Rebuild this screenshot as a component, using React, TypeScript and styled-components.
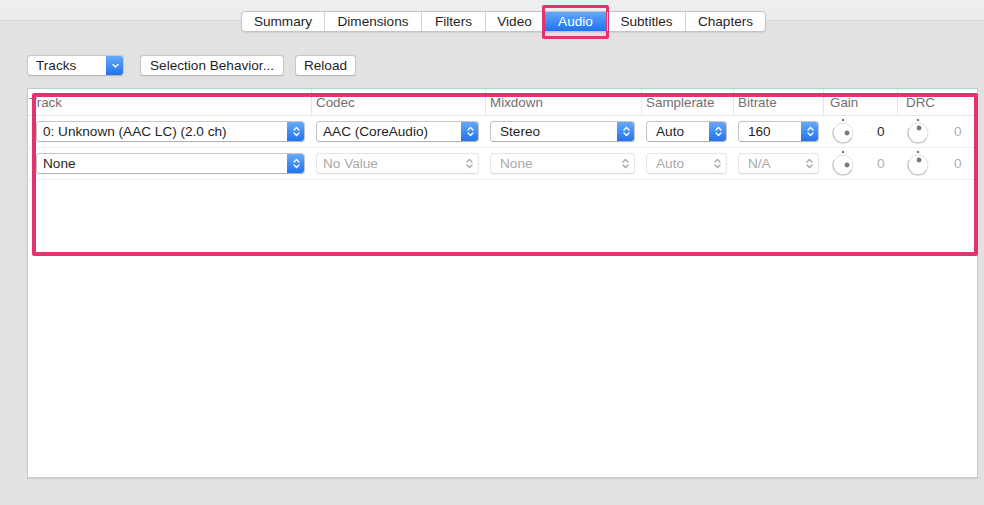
import React from "react"
import styled, { createGlobalStyle, css } from "styled-components"

const GlobalStyle = createGlobalStyle`
  *, *::before, *::after { box-sizing: border-box; }
  html, body { margin: 0; padding: 0; }
  body {
    background: #e2e2e2;
    font-family: "Liberation Sans", Arial, sans-serif;
    font-size: 13.6px;
    color: #1f1f1f;
  }
`

const Window = styled.div`
  width: 984px;
  height: 505px;
  display: flex;
  flex-direction: column;
  overflow: hidden;
  background: linear-gradient(
    #eeeeee 0,
    #ececec 20px,
    #d6d6d6 20px,
    #d6d6d6 21px,
    #e2e2e2 21px
  );
`

const TabBar = styled.div`
  display: flex;
  align-self: flex-start;
  margin: 11px 0 0 241px;
  height: 21px;
  background: #fff;
  border: 1px solid #c4c4c4;
  border-radius: 4px;
  box-shadow: 0 1px 1px rgba(0, 0, 0, 0.08);
`
const Tab = styled.div<{ $w: number; $active?: boolean }>`
  position: relative;
  width: ${(p) => p.$w}px;
  display: flex;
  align-items: center;
  justify-content: center;
  border-left: 1px solid #d4d4d4;
  &:first-child {
    border-left: none;
  }
  ${(p) =>
    p.$active &&
    css`
      background: linear-gradient(#62a8fb, #1f72f1);
      color: #fff;
      border-left-color: #2a76e0;
    `}
`
const Highlight = styled.div`
  position: absolute;
  top: -7px;
  bottom: -8px;
  left: -2px;
  right: -2px;
  border: 3px solid #e3336d;
  border-radius: 2px;
`

const Toolbar = styled.div`
  display: flex;
  align-items: center;
  margin: 23px 0 0 27px;
  height: 21px;
`
const Button = styled.div<{ $w: number; $gap: number }>`
  width: ${(p) => p.$w}px;
  height: 21px;
  margin-left: ${(p) => p.$gap}px;
  display: flex;
  align-items: center;
  justify-content: center;
  background: #fff;
  border: 1px solid #c6c6c6;
  border-bottom-color: #b4b4b4;
  border-radius: 4px;
  box-shadow: 0 1px 0 rgba(0, 0, 0, 0.04);
`

const Panel = styled.div`
  position: relative;
  margin: 12px 6px 0 27px;
  height: 390px;
  background: #fff;
  border: 1px solid #c9c9c9;
  box-shadow: 0 1px 1px rgba(0, 0, 0, 0.08);
`
const TableGrid = styled.div`
  display: grid;
  grid-template-columns: 283px 174px 156px 92px 90px 74px 1fr;
`
const HeadCell = styled.div<{ $pad: number; $first?: boolean }>`
  height: 27px;
  display: flex;
  align-items: center;
  padding-left: ${(p) => p.$pad}px;
  padding-top: 1px;
  font-size: 13.4px;
  color: #707070;
  border-bottom: 1px solid #e6e6e6;
  border-left: ${(p) => (p.$first ? "none" : "1px solid #e6e6e6")};
`
const Cell = styled.div<{ $pad: number }>`
  height: 32px;
  display: flex;
  align-items: center;
  padding-left: ${(p) => p.$pad}px;
  border-bottom: 1px solid #f0f0f0;
`
const Marker = styled.div`
  position: absolute;
  left: 4px;
  top: 4px;
  width: 946px;
  height: 163px;
  border: 4px solid #e3336d;
  border-radius: 2px;
  pointer-events: none;
`

const PopupBox = styled.div<{ $w: number; $disabled?: boolean }>`
  width: ${(p) => p.$w}px;
  height: 21px;
  display: flex;
  background: #fff;
  border: 1px solid ${(p) => (p.$disabled ? "#e4e4e4" : "#c6c6c6")};
  border-bottom-color: ${(p) => (p.$disabled ? "#dcdcdc" : "#b2b2b2")};
  border-radius: 4px;
  overflow: hidden;
  color: ${(p) => (p.$disabled ? "#a9a9a9" : "#1f1f1f")};
  box-shadow: 0 1px 0 rgba(0, 0, 0, 0.03);
`
const PopupLabel = styled.span<{ $pad?: number }>`
  flex: 1;
  display: flex;
  align-items: center;
  padding-left: ${(p) => p.$pad ?? 6}px;
  white-space: nowrap;
  overflow: hidden;
`
const PopupArrow = styled.span<{ $blue: boolean }>`
  width: 17px;
  display: flex;
  align-items: center;
  justify-content: center;
  ${(p) =>
    p.$blue &&
    css`
      background: linear-gradient(#69acfa, #1e70ec);
      margin: -1px -1px -1px 0;
      width: 18px;
      border-radius: 0 4px 4px 0;
    `}
`

const KnobCell = styled.div<{ $pad: number; $gap: number; $dim?: boolean }>`
  height: 32px;
  display: flex;
  align-items: center;
  padding-left: ${(p) => p.$pad}px;
  gap: ${(p) => p.$gap}px;
  color: ${(p) => (p.$dim ? "#b0b0b0" : "#1f1f1f")};
  border-bottom: 1px solid #f0f0f0;
`

const Chevrons = ({ color }: { color: string }) => (
  <svg width="9" height="13" viewBox="0 0 9 13">
    <path d="M2 5 L4.5 2.5 L7 5 M2 8 L4.5 10.5 L7 8" fill="none" stroke={color} strokeWidth="1.4" strokeLinecap="round" strokeLinejoin="round" />
  </svg>
)

const DownChevron = () => (
  <svg width="9" height="9" viewBox="0 0 9 9">
    <path d="M2 3.5 L4.5 6 L7 3.5" fill="none" stroke="#fff" strokeWidth="1.4" strokeLinecap="round" strokeLinejoin="round" />
  </svg>
)

type PopupProps = { label: string; w: number; disabled?: boolean; blue?: boolean; pad?: number }

const Popup: React.FC<PopupProps> = ({ label, w, disabled, blue, pad }) => {
  const isBlue = blue ?? !disabled
  return (
    <PopupBox $w={w} $disabled={disabled}>
      <PopupLabel $pad={pad}>{label}</PopupLabel>
      <PopupArrow $blue={isBlue}>
        <Chevrons color={isBlue ? "#fff" : "#a8a8a8"} />
      </PopupArrow>
    </PopupBox>
  )
}

const Knob = ({ dx, dy }: { dx: number; dy: number }) => (
  <svg width="24" height="32" viewBox="0 0 24 32">
    <circle cx="12" cy="4" r="1.1" fill="#555" />
    <circle cx="12" cy="17" r="10" fill="#fff" stroke="#e0e0e0" strokeWidth="1" />
    <path d="M3.3 12 A10 10 0 0 0 12 27 A10 10 0 0 0 20.7 22" fill="none" stroke="#c2c2c2" strokeWidth="1.2" />
    <circle cx={12 + dx} cy={17 + dy} r="2.4" fill="#777" />
  </svg>
)

const headers = [
  { label: "Track", pad: 1, first: true },
  { label: "Codec", pad: 4 },
  { label: "Mixdown", pad: 4 },
  { label: "Samplerate", pad: 4 },
  { label: "Bitrate", pad: 4 },
  { label: "Gain", pad: 6 },
  { label: "DRC", pad: 8 },
]

type Row = {
  track: string
  codec: string
  mixdown: string
  rate: string
  bitrate: string
  disabled: boolean
}

const rows: Row[] = [
  { track: "0: Unknown (AAC LC) (2.0 ch)", codec: "AAC (CoreAudio)", mixdown: "Stereo", rate: "Auto", bitrate: "160", disabled: false },
  { track: "None", codec: "No Value", mixdown: "None", rate: "Auto", bitrate: "N/A", disabled: true },
]

const tabs = [
  { label: "Summary", w: 82 },
  { label: "Dimensions", w: 97 },
  { label: "Filters", w: 64 },
  { label: "Video", w: 58 },
  { label: "Audio", w: 64, active: true },
  { label: "Subtitles", w: 78 },
  { label: "Chapters", w: 80 },
]

const App: React.FC = () => {
  return (
    <>
      <GlobalStyle />
      <Window>
        <TabBar>
          {tabs.map((tab) => (
            <Tab key={tab.label} $w={tab.w} $active={tab.active}>
              {tab.label}
              {tab.active ? <Highlight /> : null}
            </Tab>
          ))}
        </TabBar>

        <Toolbar>
          <PopupBox $w={97}>
            <PopupLabel $pad={8}>Tracks</PopupLabel>
            <PopupArrow $blue>
              <DownChevron />
            </PopupArrow>
          </PopupBox>
          <Button $w={144} $gap={16}>Selection Behavior...</Button>
          <Button $w={61} $gap={11}>Reload</Button>
        </Toolbar>

        <Panel>
          <TableGrid>
            {headers.map((h) => (
              <HeadCell key={h.label} $pad={h.pad} $first={h.first}>
                {h.label}
              </HeadCell>
            ))}

            {rows.map((row, i) => (
              <React.Fragment key={i}>
                <Cell $pad={8}>
                  <Popup label={row.track} w={269} blue pad={6} />
                </Cell>
                <Cell $pad={5}>
                  <Popup label={row.codec} w={163} disabled={row.disabled} />
                </Cell>
                <Cell $pad={5}>
                  <Popup label={row.mixdown} w={145} disabled={row.disabled} pad={9} />
                </Cell>
                <Cell $pad={5}>
                  <Popup label={row.rate} w={81} disabled={row.disabled} pad={9} />
                </Cell>
                <Cell $pad={5}>
                  <Popup label={row.bitrate} w={81} disabled={row.disabled} pad={9} />
                </Cell>
                <KnobCell $pad={8} $gap={22} $dim={row.disabled}>
                  <Knob dx={4} dy={0} />
                  <span>0</span>
                </KnobCell>
                <KnobCell $pad={9} $gap={24} $dim>
                  <Knob dx={1} dy={-5} />
                  <span>0</span>
                </KnobCell>
              </React.Fragment>
            ))}
          </TableGrid>
          <Marker />
        </Panel>
      </Window>
    </>
  )
}

export default App
